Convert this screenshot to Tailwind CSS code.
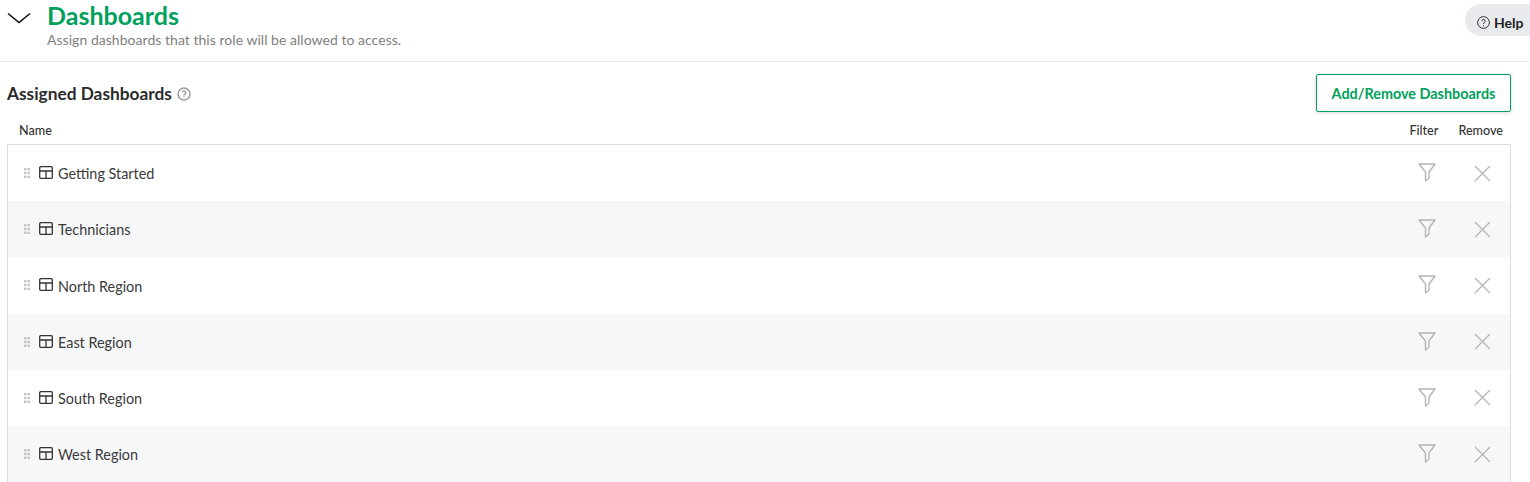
<!DOCTYPE html>
<html lang="en">
<head>
<meta charset="UTF-8">
<title>Dashboards</title>
<script src="https://cdn.jsdelivr.net/npm/@tailwindcss/browser@4"></script>
</head>
<body class="bg-white font-['Lato',sans-serif] h-[482px] overflow-hidden text-[#333]">

<!-- section header -->
<header class="h-[62px] border-b border-[#ebebeb] flex items-start relative">
  <svg class="w-6 h-3 ml-[7px] mt-[12px]" viewBox="0 0 24 12" fill="none" stroke="#111" stroke-width="1.6"><path d="M1 1.5 12 10.5 23 1.5"/></svg>
  <div class="ml-[16px]">
    <h1 class="text-[25px] leading-[30px] font-bold text-[#00a15c]">Dashboards</h1>
    <p class="text-[14px] leading-[18px] mt-[1px] tracking-[0.035px] text-[#808080]">Assign dashboards that this role will be allowed to access.</p>
  </div>
  <div class="absolute right-0 top-[4px] w-[65px] h-[32px] bg-[#e9eaed] rounded-l-[16px] flex items-center pl-[12px] pt-[5px] gap-[4px] text-[14px] font-bold text-[#222]">
    <svg class="w-[13px] h-[13px]" viewBox="0 0 14 14" fill="none" stroke="#222" stroke-width="1"><circle cx="7" cy="7" r="6.3"/><path d="M5.2 5.5a1.8 1.8 0 1 1 2.8 1.5c-.7.4-1 .8-1 1.6"/><path d="M7 10v1"/></svg>
    Help
  </div>
</header>

<main class="pl-[7px] pr-[19px]">
  <div class="flex items-start justify-between h-[50px] pt-[12px]">
    <div class="flex items-center gap-[5px] h-[38px]">
      <h2 class="text-[17.3px] font-bold text-[#2b2b2b] pt-[1px]">Assigned Dashboards</h2>
      <svg class="w-[14px] h-[14px] mt-[1px]" viewBox="0 0 14 14" fill="none" stroke="#999" stroke-width="1.4"><circle cx="7" cy="7" r="6"/><path d="M5.3 5.6a1.7 1.7 0 1 1 2.7 1.4c-.7.4-1 .8-1 1.5"/><path d="M7 9.6v1"/></svg>
    </div>
    <button class="w-[195px] h-[38px] pt-[1px] border border-[#00a15c] rounded-[2px] bg-white text-[#00a15c] text-[14.4px] font-bold shadow-[0_1px_4px_rgba(0,0,0,0.15)]">Add/Remove Dashboards</button>
  </div>

  <div class="flex items-center h-[32px] pt-[7px] text-[12.6px] font-medium text-[#333] pl-[12px] pr-[8px]">
    <span class="flex-1">Name</span>
    <span>Filter</span>
    <span class="ml-[20px]">Remove</span>
  </div>

  <ul class="border-x border-t border-[#dcdcdc] text-[14.4px] text-[#3a3a3a]">
    <li class="flex items-center h-[56.2px]">
      <svg class="w-[6px] h-[10px] ml-[16px]" viewBox="0 0 6 10" fill="#c4c4c4"><rect x="0" y="0" width="2.5" height="2.4"/><rect x="3.5" y="0" width="2.5" height="2.4"/><rect x="0" y="3.8" width="2.5" height="2.4"/><rect x="3.5" y="3.8" width="2.5" height="2.4"/><rect x="0" y="7.6" width="2.5" height="2.4"/><rect x="3.5" y="7.6" width="2.5" height="2.4"/></svg>
      <svg class="w-[14px] h-[13px] ml-[9px] -mt-[1px]" viewBox="0 0 14 13" fill="none" stroke="#333" stroke-width="1.3"><rect x=".7" y=".7" width="12.6" height="11.6" rx="1"/><path d="M.7 5h12.6M7 5v7.3"/></svg>
      <span class="ml-[5px] flex-1 pt-[2px]">Getting Started</span>
      <svg class="w-[18px] h-[19px] mr-[38px] -mt-[1px]" viewBox="0 0 18 19" fill="none" stroke="#b5b5b5" stroke-width="1.4"><path d="M1 1h16L11 9v6l-3.5 3V9z" stroke-linejoin="round"/></svg>
      <svg class="w-[17px] h-[17px] mr-[19px]" viewBox="0 0 17 17" fill="none" stroke="#b5b5b5" stroke-width="1.3"><path d="M1 1l15 15M16 1 1 16"/></svg>
    </li>
    <li class="flex items-center h-[56.2px] bg-[#f6f7f9]">
      <svg class="w-[6px] h-[10px] ml-[16px]" viewBox="0 0 6 10" fill="#c4c4c4"><rect x="0" y="0" width="2.5" height="2.4"/><rect x="3.5" y="0" width="2.5" height="2.4"/><rect x="0" y="3.8" width="2.5" height="2.4"/><rect x="3.5" y="3.8" width="2.5" height="2.4"/><rect x="0" y="7.6" width="2.5" height="2.4"/><rect x="3.5" y="7.6" width="2.5" height="2.4"/></svg>
      <svg class="w-[14px] h-[13px] ml-[9px] -mt-[1px]" viewBox="0 0 14 13" fill="none" stroke="#333" stroke-width="1.3"><rect x=".7" y=".7" width="12.6" height="11.6" rx="1"/><path d="M.7 5h12.6M7 5v7.3"/></svg>
      <span class="ml-[5px] flex-1 pt-[2px]">Technicians</span>
      <svg class="w-[18px] h-[19px] mr-[38px] -mt-[1px]" viewBox="0 0 18 19" fill="none" stroke="#b5b5b5" stroke-width="1.4"><path d="M1 1h16L11 9v6l-3.5 3V9z" stroke-linejoin="round"/></svg>
      <svg class="w-[17px] h-[17px] mr-[19px]" viewBox="0 0 17 17" fill="none" stroke="#b5b5b5" stroke-width="1.3"><path d="M1 1l15 15M16 1 1 16"/></svg>
    </li>
    <li class="flex items-center h-[56.2px]">
      <svg class="w-[6px] h-[10px] ml-[16px]" viewBox="0 0 6 10" fill="#c4c4c4"><rect x="0" y="0" width="2.5" height="2.4"/><rect x="3.5" y="0" width="2.5" height="2.4"/><rect x="0" y="3.8" width="2.5" height="2.4"/><rect x="3.5" y="3.8" width="2.5" height="2.4"/><rect x="0" y="7.6" width="2.5" height="2.4"/><rect x="3.5" y="7.6" width="2.5" height="2.4"/></svg>
      <svg class="w-[14px] h-[13px] ml-[9px] -mt-[1px]" viewBox="0 0 14 13" fill="none" stroke="#333" stroke-width="1.3"><rect x=".7" y=".7" width="12.6" height="11.6" rx="1"/><path d="M.7 5h12.6M7 5v7.3"/></svg>
      <span class="ml-[5px] flex-1 pt-[2px]">North Region</span>
      <svg class="w-[18px] h-[19px] mr-[38px] -mt-[1px]" viewBox="0 0 18 19" fill="none" stroke="#b5b5b5" stroke-width="1.4"><path d="M1 1h16L11 9v6l-3.5 3V9z" stroke-linejoin="round"/></svg>
      <svg class="w-[17px] h-[17px] mr-[19px]" viewBox="0 0 17 17" fill="none" stroke="#b5b5b5" stroke-width="1.3"><path d="M1 1l15 15M16 1 1 16"/></svg>
    </li>
    <li class="flex items-center h-[56.2px] bg-[#f6f7f9]">
      <svg class="w-[6px] h-[10px] ml-[16px]" viewBox="0 0 6 10" fill="#c4c4c4"><rect x="0" y="0" width="2.5" height="2.4"/><rect x="3.5" y="0" width="2.5" height="2.4"/><rect x="0" y="3.8" width="2.5" height="2.4"/><rect x="3.5" y="3.8" width="2.5" height="2.4"/><rect x="0" y="7.6" width="2.5" height="2.4"/><rect x="3.5" y="7.6" width="2.5" height="2.4"/></svg>
      <svg class="w-[14px] h-[13px] ml-[9px] -mt-[1px]" viewBox="0 0 14 13" fill="none" stroke="#333" stroke-width="1.3"><rect x=".7" y=".7" width="12.6" height="11.6" rx="1"/><path d="M.7 5h12.6M7 5v7.3"/></svg>
      <span class="ml-[5px] flex-1 pt-[2px]">East Region</span>
      <svg class="w-[18px] h-[19px] mr-[38px] -mt-[1px]" viewBox="0 0 18 19" fill="none" stroke="#b5b5b5" stroke-width="1.4"><path d="M1 1h16L11 9v6l-3.5 3V9z" stroke-linejoin="round"/></svg>
      <svg class="w-[17px] h-[17px] mr-[19px]" viewBox="0 0 17 17" fill="none" stroke="#b5b5b5" stroke-width="1.3"><path d="M1 1l15 15M16 1 1 16"/></svg>
    </li>
    <li class="flex items-center h-[56.2px]">
      <svg class="w-[6px] h-[10px] ml-[16px]" viewBox="0 0 6 10" fill="#c4c4c4"><rect x="0" y="0" width="2.5" height="2.4"/><rect x="3.5" y="0" width="2.5" height="2.4"/><rect x="0" y="3.8" width="2.5" height="2.4"/><rect x="3.5" y="3.8" width="2.5" height="2.4"/><rect x="0" y="7.6" width="2.5" height="2.4"/><rect x="3.5" y="7.6" width="2.5" height="2.4"/></svg>
      <svg class="w-[14px] h-[13px] ml-[9px] -mt-[1px]" viewBox="0 0 14 13" fill="none" stroke="#333" stroke-width="1.3"><rect x=".7" y=".7" width="12.6" height="11.6" rx="1"/><path d="M.7 5h12.6M7 5v7.3"/></svg>
      <span class="ml-[5px] flex-1 pt-[2px]">South Region</span>
      <svg class="w-[18px] h-[19px] mr-[38px] -mt-[1px]" viewBox="0 0 18 19" fill="none" stroke="#b5b5b5" stroke-width="1.4"><path d="M1 1h16L11 9v6l-3.5 3V9z" stroke-linejoin="round"/></svg>
      <svg class="w-[17px] h-[17px] mr-[19px]" viewBox="0 0 17 17" fill="none" stroke="#b5b5b5" stroke-width="1.3"><path d="M1 1l15 15M16 1 1 16"/></svg>
    </li>
    <li class="flex items-center h-[56.2px] bg-[#f6f7f9]">
      <svg class="w-[6px] h-[10px] ml-[16px]" viewBox="0 0 6 10" fill="#c4c4c4"><rect x="0" y="0" width="2.5" height="2.4"/><rect x="3.5" y="0" width="2.5" height="2.4"/><rect x="0" y="3.8" width="2.5" height="2.4"/><rect x="3.5" y="3.8" width="2.5" height="2.4"/><rect x="0" y="7.6" width="2.5" height="2.4"/><rect x="3.5" y="7.6" width="2.5" height="2.4"/></svg>
      <svg class="w-[14px] h-[13px] ml-[9px] -mt-[1px]" viewBox="0 0 14 13" fill="none" stroke="#333" stroke-width="1.3"><rect x=".7" y=".7" width="12.6" height="11.6" rx="1"/><path d="M.7 5h12.6M7 5v7.3"/></svg>
      <span class="ml-[5px] flex-1 pt-[2px]">West Region</span>
      <svg class="w-[18px] h-[19px] mr-[38px] -mt-[1px]" viewBox="0 0 18 19" fill="none" stroke="#b5b5b5" stroke-width="1.4"><path d="M1 1h16L11 9v6l-3.5 3V9z" stroke-linejoin="round"/></svg>
      <svg class="w-[17px] h-[17px] mr-[19px]" viewBox="0 0 17 17" fill="none" stroke="#b5b5b5" stroke-width="1.3"><path d="M1 1l15 15M16 1 1 16"/></svg>
    </li>
  </ul>
</main>
</body>
</html>
